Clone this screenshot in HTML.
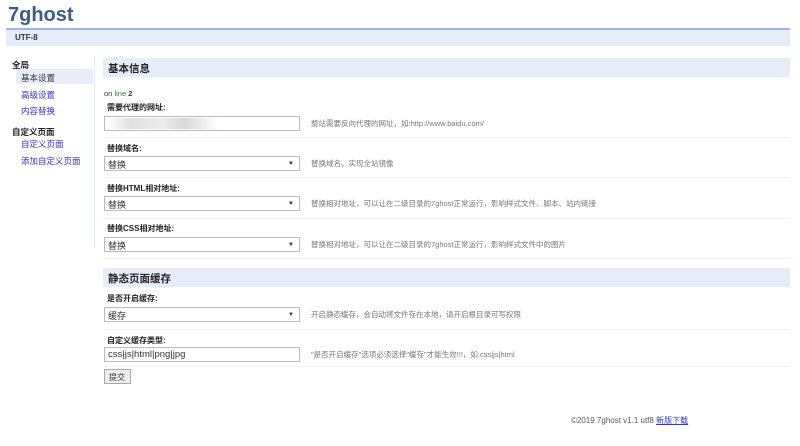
<!DOCTYPE html>
<html><head><meta charset="utf-8"><style>
*{margin:0;padding:0;box-sizing:border-box}
body{width:800px;height:446px;background:#fff;font-family:"Liberation Sans","Noto Sans CJK SC",sans-serif;font-size:8px;color:#333;position:relative;overflow:hidden}
.a{position:absolute;white-space:nowrap}
.title{left:8px;top:4px;font-size:20px;font-weight:bold;color:#3d5a8c}
.hbar{left:6px;top:28px;width:784px;height:18px;background:#e6ecf8;border-top:2px solid #9fb4e0;font-weight:bold;font-size:8px;padding:3px 0 0 9px;color:#333}
.vline{left:94px;top:57px;width:1px;height:190px;background:#e3e8f0}
.sel{left:16px;top:69px;width:77px;height:15px;background:#e8edf8}
.nav{color:#3333cc;font-size:8.5px}
.sec{left:103px;width:687px;height:19px;background:#e6ecf8;font-weight:bold;font-size:10.5px;padding:3px 0 0 5px;color:#222}
.lbl{left:107px;font-weight:bold;font-size:8px;color:#222}
.box{left:104px;width:196px;height:15px;border:1px solid #bbb;background:#fff;font-size:9px;padding:1px 3px;color:#333}
.box .arr{position:absolute;right:5px;top:4px;font-size:6px}
.help{left:311px;font-size:7.5px;color:#777}
.sep{left:103px;width:687px;height:1px;background:#f2f2f2}
</style></head><body>
<div class="a title">7ghost</div>
<div class="a hbar">UTF-8</div>
<div class="a vline"></div>
<div class="a sel"></div>
<div class="a" style="left:12px;top:59px;font-weight:bold;font-size:8.5px;color:#222">全局</div>
<div class="a" style="left:21px;top:72px;font-size:8.5px;color:#333">基本设置</div>
<div class="a nav" style="left:21px;top:89px">高级设置</div>
<div class="a nav" style="left:21px;top:105px">内容替换</div>
<div class="a" style="left:12px;top:126px;font-weight:bold;font-size:8.5px;color:#222">自定义页面</div>
<div class="a nav" style="left:21px;top:138px">自定义页面</div>
<div class="a nav" style="left:21px;top:155px">添加自定义页面</div>

<div class="a sec" style="top:58px">基本信息</div>
<div class="a" style="left:104px;top:89px;font-size:7.5px;color:#333">on <span style="color:#3a7a3a">line</span> <b>2</b></div>
<div class="a lbl" style="top:102px">需要代理的网址:</div>
<div class="a box" style="top:116px"><span style="display:inline-block;width:110px;height:11px;background:linear-gradient(90deg,#fff,#e0e0e0 20%,#ececec 50%,#d8d8d8 70%,#fff)"></span></div>
<div class="a help" style="top:118px">整站需要反向代理的网址，如:http://www.baidu.com/</div>
<div class="a sep" style="top:137px"></div>
<div class="a lbl" style="top:143px">替换域名:</div>
<div class="a box" style="top:156px">替换<span class="arr">▼</span></div>
<div class="a help" style="top:158px">替换域名，实现全站镜像</div>
<div class="a sep" style="top:177px"></div>
<div class="a lbl" style="top:183px">替换HTML相对地址:</div>
<div class="a box" style="top:196px">替换<span class="arr">▼</span></div>
<div class="a help" style="top:198px">替换相对地址，可以让在二级目录的7ghost正常运行，影响样式文件、脚本、站内链接</div>
<div class="a sep" style="top:218px"></div>
<div class="a lbl" style="top:223px">替换CSS相对地址:</div>
<div class="a box" style="top:237px">替换<span class="arr">▼</span></div>
<div class="a help" style="top:239px">替换相对地址，可以让在二级目录的7ghost正常运行，影响样式文件中的图片</div>
<div class="a sep" style="top:258px"></div>

<div class="a sec" style="top:268px">静态页面缓存</div>
<div class="a lbl" style="top:293px">是否开启缓存:</div>
<div class="a box" style="top:307px">缓存<span class="arr">▼</span></div>
<div class="a help" style="top:309px">开启静态缓存，会自动将文件存在本地，请开启根目录可写权限</div>
<div class="a sep" style="top:329px"></div>
<div class="a lbl" style="top:335px">自定义缓存类型:</div>
<div class="a box" style="top:347px;font-size:9.5px">css|js|html|png|jpg</div>
<div class="a help" style="top:349px">"是否开启缓存"选项必须选择"缓存"才能生效!!!，如:css|js|html</div>
<div class="a sep" style="top:366px"></div>
<div class="a" style="left:104px;top:369px;width:27px;height:15px;border:1px solid #aaa;background:#eee;font-size:8px;padding:2px 0 0 4px">提交</div>

<div class="a" style="left:571px;top:415px;font-size:8px;color:#555">©2019 7ghost v1.1 utf8 <span style="color:#3333cc;text-decoration:underline">新版下载</span></div>
</body></html>
